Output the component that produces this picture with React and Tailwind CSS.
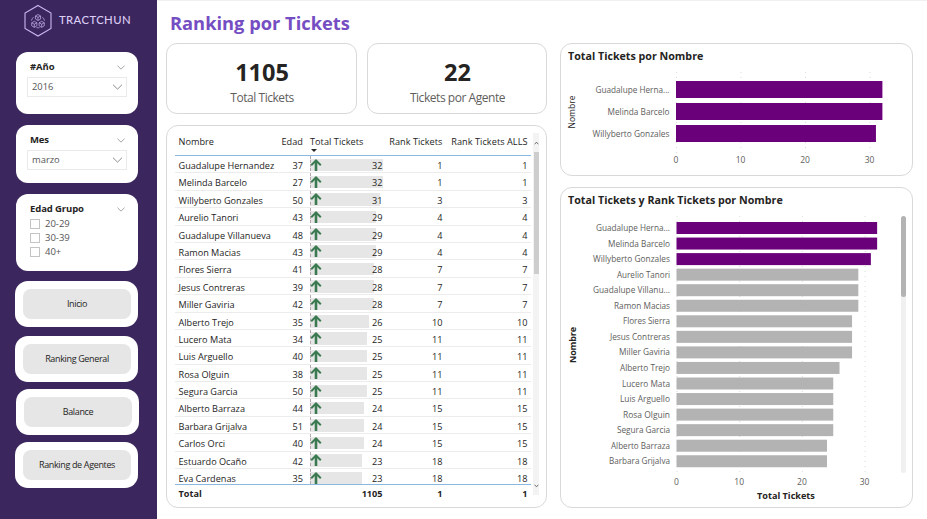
import React from "react";

const rows = [
  ["Guadalupe Hernandez", 37, 32, 1],
  ["Melinda Barcelo", 27, 32, 1],
  ["Willyberto Gonzales", 50, 31, 3],
  ["Aurelio Tanori", 43, 29, 4],
  ["Guadalupe Villanueva", 48, 29, 4],
  ["Ramon Macias", 43, 29, 4],
  ["Flores Sierra", 41, 28, 7],
  ["Jesus Contreras", 39, 28, 7],
  ["Miller Gaviria", 42, 28, 7],
  ["Alberto Trejo", 35, 26, 10],
  ["Lucero Mata", 34, 25, 11],
  ["Luis Arguello", 40, 25, 11],
  ["Rosa Olguin", 38, 25, 11],
  ["Segura Garcia", 50, 25, 11],
  ["Alberto Barraza", 44, 24, 15],
  ["Barbara Grijalva", 51, 24, 15],
  ["Carlos Orci", 40, 24, 15],
  ["Estuardo Ocaño", 42, 23, 18],
  ["Eva Cardenas", 35, 23, 18],
];

// label, value, rendered label width
const topBars = [
  ["Guadalupe Herna...", 32, 74],
  ["Melinda Barcelo", 32, 62],
  ["Willyberto Gonzales", 31, 77],
];

const rankBars = [
  ["Guadalupe Herna...", 32, 74],
  ["Melinda Barcelo", 32, 62],
  ["Willyberto Gonzales", 31, 77],
  ["Aurelio Tanori", 29, 53],
  ["Guadalupe Villanu...", 29, 77],
  ["Ramon Macias", 29, 56],
  ["Flores Sierra", 28, 47],
  ["Jesus Contreras", 28, 60],
  ["Miller Gaviria", 28, 51],
  ["Alberto Trejo", 26, 50],
  ["Lucero Mata", 25, 48],
  ["Luis Arguello", 25, 50],
  ["Rosa Olguin", 25, 47],
  ["Segura Garcia", 25, 53],
  ["Alberto Barraza", 24, 59],
  ["Barbara Grijalva", 24, 61],
];

function Chevron({ className }) {
  return (
    <svg viewBox="0 0 12 7" className={className} fill="none" stroke="#777" strokeWidth="1">
      <path d="M.7.8 6 6 11.300.8" />
    </svg>
  );
}

function Logo() {
  return (
    <svg viewBox="0 0 30 34" className="h-[34px] w-[30px]" fill="none" stroke="#cdb6f2">
      <path d="M15 1.500 28 9v15.500L15 32 2 24.500V9Z" strokeWidth="1.100" />
      <g strokeWidth=".7">
        <path d="M15 10.500 17.600 12v3L15 16.500 12.400 15v-3ZM12.400 12 15 13.400 17.600 12M15 13.400v3.100" />
        <path d="m11.300 17.300 2.600 1.500v3l-2.600 1.500-2.600-1.500v-3ZM8.700 18.800l2.600 1.400 2.600-1.400M11.300 20.200v3.100" />
        <path d="m18.700 17.300 2.600 1.500v3l-2.600 1.500-2.600-1.500v-3ZM16.100 18.800l2.600 1.400 2.600-1.400M18.700 20.200v3.100" />
        <path d="M10.500 13.200c-1 .9-1.800 2-2 3.500M19.500 13.200c1 .9 1.800 2 2 3.500M13.500 23.600c1 .3 2 .3 3 0" />
      </g>
    </svg>
  );
}

function Slicer({ title, children, className }) {
  return (
    <div className={"ml-4 w-[122px] rounded-[12px] bg-white pt-[7px] " + className}>
      <div className="flex h-4 items-center justify-between pl-[14px] pr-[13px]">
        <span className="text-[9.500px] font-bold tracking-[-0.1px] text-[#252423]">{title}</span>
        <Chevron className="h-[5px] w-[8px]" />
      </div>
      {children}
    </div>
  );
}

function Select({ value }) {
  return (
    <div className="ml-[11px] mt-[2px] flex h-5 w-[100px] items-center justify-between border border-[#eaeaea] pl-1 pr-[3px]">
      <span className="pt-px text-[9.400px] text-[#555]">{value}</span>
      <Chevron className="h-[6px] w-[11px]" />
    </div>
  );
}

function NavButton({ label, className }) {
  return (
    <div className={"flex h-[46px] w-[123px] items-center justify-center rounded-[13px] bg-white " + className}>
      <div className="flex h-[30px] w-[108px] items-center justify-center rounded-[8px] bg-[#e6e6e6] pb-px pl-px text-[9px] tracking-[-0.35px] text-[#252423]">
        {label}
      </div>
    </div>
  );
}

function Kpi({ value, label, className }) {
  return (
    <div className={"flex h-[71px] flex-col items-center rounded-[11px] border border-[#d9d9d9] pl-px pt-[14px] " + className}>
      <div className="text-[23.500px] font-bold leading-[28px] text-[#252423]">{value}</div>
      <div className="mt-[4px] text-[12px] leading-[16px] tracking-[-0.45px] text-[#605e5c]">{label}</div>
    </div>
  );
}

function Arrow() {
  return (
    <svg viewBox="0 0 12 12" className="relative h-3 w-3" fill="none" stroke="#3b7a50">
      <path d="M6 12V1.500" strokeWidth="2.600" />
      <path d="M1.200 6.200 6 1.500l4.800 4.700" strokeWidth="2" />
    </svg>
  );
}

const grid = "grid grid-cols-[124.500px_7px_72.500px_60px_85px] pl-[3.500px]";

function Table() {
  return (
    <div className="flex h-[383px] w-[381px] rounded-[12px] border border-[#d9d9d9] pl-2 pt-[7px] text-[9.15px] text-[#252423]">
      <div className="w-[356px]">
        <div className="h-[23px] border-b border-[#8ab8e0]">
          <div className="grid h-[18px] w-full grid-cols-[62px_62.500px_7px_72.500px_60px_85px] items-center pl-[3.500px] tracking-[0.05px]">
            <span>Nombre</span>
            <span className="text-right">Edad</span>
            <span />
            <span className="relative whitespace-nowrap">
              Total Tickets
              <svg viewBox="0 0 6 3" className="absolute left-px top-[14px] h-[3px] w-[6px]">
                <path d="M0 0h6L3 3Z" fill="#252423" />
              </svg>
            </span>
            <span className="whitespace-nowrap text-right">Rank Tickets</span>
            <span className="whitespace-nowrap text-right">Rank Tickets ALLS</span>
          </div>
        </div>
        <div className="h-[328px] overflow-hidden">
          {rows.map(([name, age, total, rank], i) => (
            <div
              key={name}
              className={grid + " items-start leading-[11px] " + (i < rows.length - 1 ? "h-[17.400px] border-b border-[#ececec]" : "h-[14.800px]")}
            >
              <span className="flex justify-between pt-[4px]">
                <span>{name}</span>
                <span>{age}</span>
              </span>
              <span />
              <span className="relative flex">
                <span className="absolute left-0 top-[2.500px] h-[12.500px] bg-[#e6e6e6]" style={{ width: total * 2.27 }} />
                <span className="absolute left-0 top-0 h-[14.500px] border-l border-dashed border-[#b8a8ae]" />
                <span className="pt-[2.500px]"><Arrow /></span>
                <span className="relative ml-auto pt-[4px]">{total}</span>
              </span>
              <span className="pt-[4px] text-right">{rank}</span>
              <span className="pt-[4px] text-right">{rank}</span>
            </div>
          ))}
        </div>
        <div className={grid + " h-[19px] items-center border-t border-[#8ab8e0] font-bold"}>
          <span>Total</span>
          <span />
          <span className="text-right">1105</span>
          <span className="text-right">1</span>
          <span className="text-right">1</span>
        </div>
      </div>
      <div className="ml-[2px] flex h-[362px] w-[6px] flex-col items-center justify-between bg-[#f3f3f3]">
        <div className="flex w-full flex-col items-center">
          <svg viewBox="0 0 6 4" className="mb-[7px] mt-2 h-1 w-[5px]" fill="none" stroke="#555">
            <path d="M.8 3.500 3 1l2.200 2.500" />
          </svg>
          <div className="h-[122px] w-[5px] bg-[#cdcdcd]" />
        </div>
        <svg viewBox="0 0 6 4" className="mb-[7px] h-1 w-[5px]" fill="none" stroke="#555">
          <path d="M.8.5 3 3 5.200.5" />
        </svg>
      </div>
    </div>
  );
}

function BarChart({ bars, width, height, left, unit, first, pitch, thickness, gridBottom, axisY, nameX, nameY, nameBold }) {
  return (
    <svg width={width} height={height} viewBox={`0 0 ${width} ${height}`} className="block font-['Open_Sans','Noto_Sans',sans-serif] text-[8.5px]">
      {[0, 10, 20, 30].map((n) => (
        <g key={n}>
          <line x1={left + n * unit + 0.5} x2={left + n * unit + 0.5} y1="0" y2={gridBottom} stroke="#dcdcdc" strokeDasharray="1 4" />
          <text x={left + n * unit} y={axisY} textAnchor="middle" fill="#605e5c">{n}</text>
        </g>
      ))}
      {bars.map(([label, value, w], i) => (
        <g key={label}>
          <rect x={left} y={first + i * pitch} width={value * unit} height={thickness} fill={value > 30 ? "#6b007b" : "#b3b3b3"} />
          <text x={left - 6.5 - w} y={first + i * pitch + thickness / 2 + 3} textLength={w} lengthAdjust="spacingAndGlyphs" fill="#605e5c">{label}</text>
        </g>
      ))}
      <text
        transform={`translate(${nameX} ${nameY}) rotate(-90)`}
        textAnchor="middle"
        fill="#252423"
        textLength={nameBold ? 36 : 33}
        className={nameBold ? "text-[9px] font-bold" : "text-[8.500px] font-medium"}
      >
        Nombre
      </text>
    </svg>
  );
}

export default function App() {
  return (
    <div className="flex h-[519px] w-[927px] overflow-hidden bg-white font-['Open_Sans','Noto_Sans',sans-serif]">
      <aside className="h-full w-[157px] shrink-0 bg-[#3b265e]">
        <div className="flex h-[52px] items-start pl-[23px] pt-[4px]">
          <Logo />
          <span className="ml-[6px] mt-[7px] font-['Lato',sans-serif] text-[11.300px] font-medium leading-[18px] tracking-[0.400px] text-[#dccdf5]">TRACTCHUN</span>
        </div>
        <Slicer title="#Año" className="h-[62px]">
          <Select value="2016" />
        </Slicer>
        <Slicer title="Mes" className="mt-[11px] h-[58px]">
          <Select value="marzo" />
        </Slicer>
        <Slicer title="Edad Grupo" className="mt-[11px] h-[77px]">
          {["20-29", "30-39", "40+"].map((g) => (
            <div key={g} className="flex h-[14px] items-center gap-[5px] pl-[14px] text-[9.500px] text-[#555]">
              <span className="h-[10px] w-[10px] border border-[#c4c4c4]" />
              {g}
            </div>
          ))}
        </Slicer>
        <NavButton label="Inicio" className="ml-[15px] mt-[10px]" />
        <NavButton label="Ranking General" className="ml-[15px] mt-[9px]" />
        <NavButton label="Balance" className="ml-[16px] mt-[7px]" />
        <NavButton label="Ranking de Agentes" className="ml-[15px] mt-[7px]" />
      </aside>
      <main className="flex flex-1 flex-col border-t border-[#f0f0f0] pl-[9px]">
        <h1 className="ml-[4px] flex h-[42px] items-center pt-[1px] text-[18.300px] font-bold text-[#744ec2]">Ranking por Tickets</h1>
        <div className="flex gap-[13px]">
          <div className="flex flex-col gap-[11px]">
            <div className="flex gap-[10px]">
              <Kpi value="1105" label="Total Tickets" className="w-[191px]" />
              <Kpi value="22" label="Tickets por Agente" className="w-[180px]" />
            </div>
            <Table />
          </div>
          <div className="flex flex-col gap-[11px]">
            <section className="h-[133px] w-[353px] rounded-[12px] border border-[#d9d9d9]">
              <h2 className="h-[28px] pl-[7px] pt-[4px] text-[10.700px] font-bold leading-[17px] text-[#252423]">Total Tickets por Nombre</h2>
              <BarChart bars={topBars} width={350} height={102} left={115} unit={6.45} first={9} pitch={22} thickness={17} gridBottom={81} axisY={91} nameX={14} nameY={40} />
            </section>
            <section className="h-[321px] w-[353px] rounded-[12px] border border-[#d9d9d9]">
              <h2 className="h-[28px] pl-[7px] pt-[4px] text-[10.700px] font-bold leading-[17px] text-[#252423]">Total Tickets y Rank Tickets por Nombre</h2>
              <div className="flex">
                <BarChart bars={rankBars} width={340} height={290} left={115.5} unit={6.27} first={6} pitch={15.55} thickness={12} gridBottom={257} axisY={269} nameX={15} nameY={129} nameBold />
                <div className="h-[257px] w-[5px] rounded-full bg-[#f0f0f0]">
                  <div className="h-[81px] rounded-full bg-[#b3b3b3]" />
                </div>
              </div>
              <div className="-mt-[17px] ml-[196px] text-[9.150px] font-bold leading-[14px] text-[#252423]">Total Tickets</div>
            </section>
          </div>
        </div>
      </main>
    </div>
  );
}
